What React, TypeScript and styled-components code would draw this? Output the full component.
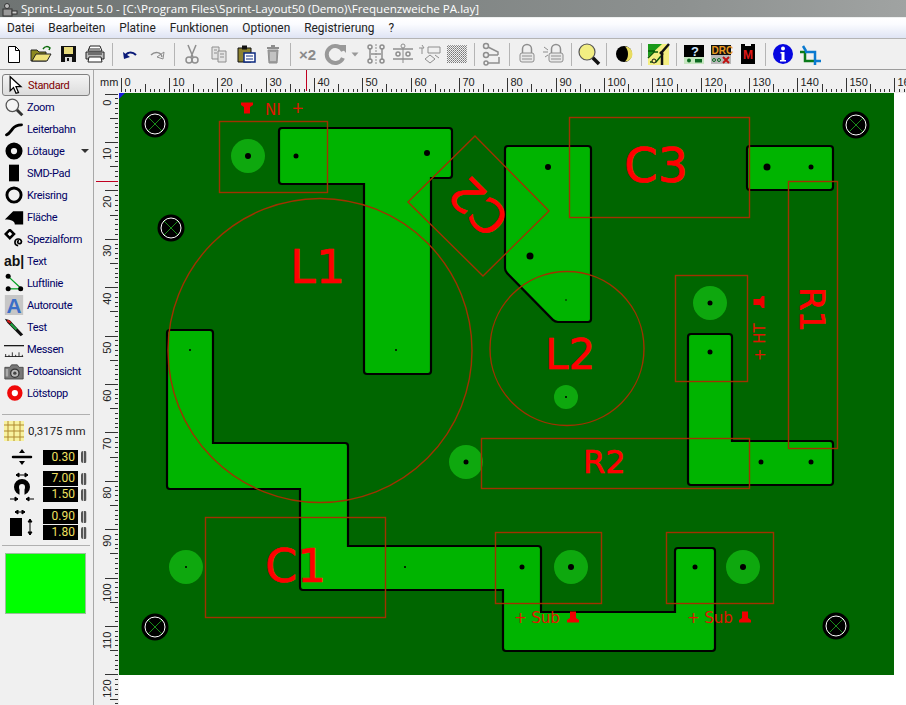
import styled, { createGlobalStyle } from 'styled-components';
import { ReactNode } from 'react';

const GlobalStyle = createGlobalStyle`
	html, body {
		margin: 0;
		padding: 0;
		background: #f0f0f0;
		overflow: hidden;
	}
`;

const Window = styled.div`
	width: 906px;
	height: 705px;
	display: flex;
	flex-direction: column;
	overflow: hidden;
	font-family: 'Roboto', 'Liberation Sans', sans-serif;
`;

const TitleBar = styled.div`
	height: 17px;
	display: flex;
	align-items: center;
	gap: 3px;
	padding-left: 2px;
	background: linear-gradient(90deg, #6f7473 0%, #7f8483 45%, #8d9190 75%, #a0a3a2 100%);
	border-bottom: 1px solid #eef0f0;
	color: #fff;
	font-family: 'Open Sans', sans-serif;
	font-size: 11.6px;
	white-space: nowrap;
`;

const MenuBar = styled.div`
	height: 20px;
	display: flex;
	align-items: center;
	gap: 14px;
	padding-left: 7px;
	background: linear-gradient(180deg, #ffffff 0%, #fbfcff 30%, #dfe4f4 100%);
	border-bottom: 1px solid #b4b4b4;
	font-size: 11.9px;
	color: #222;
`;

const Toolbar = styled.div`
	height: 30px;
	display: flex;
	align-items: center;
	background: #f0f0f0;
	border-bottom: 1px solid #9c9c9c;
`;

const ToolBtn = styled.div<{ $narrow?: boolean }>`
	width: ${(p) => (p.$narrow ? 14 : 27)}px;
	height: 26px;
	display: flex;
	align-items: center;
	justify-content: center;
	flex: none;
`;

const Sep = styled.div`
	width: 1px;
	height: 23px;
	margin: 0 3.5px;
	background: #b4b4b4;
	flex: none;
`;

const Main = styled.div`
	flex: 1;
	display: flex;
	min-height: 0;
`;

const Sidebar = styled.aside`
	width: 93px;
	flex: none;
	display: flex;
	flex-direction: column;
	padding-top: 4px;
	background: #f0f0f0;
	border-right: 1px solid #a8a8a8;
`;

const ToolRow = styled.div<{ $active?: boolean }>`
	height: ${(p) => (p.$active ? 20 : 22)}px;
	margin: 0 3px 0 2px;
	display: flex;
	align-items: center;
	gap: ${(p) => (p.$active ? 2 : 3)}px;
	padding-left: ${(p) => (p.$active ? 3 : 2)}px;
	font-size: 11px;
	letter-spacing: -0.35px;
	color: ${(p) => (p.$active ? '#800000' : '#000064')};
	border: ${(p) => (p.$active ? '1px solid #808080' : 'none')};
	border-radius: 3px;
	background: ${(p) => (p.$active ? 'linear-gradient(180deg, #f4f4f4, #dcdcdc)' : 'transparent')};
`;

const IconCell = styled.span`
	width: 20px;
	height: 20px;
	display: flex;
	align-items: center;
	justify-content: center;
	flex: none;
`;

const AbGlyph = styled.span`
	font-family: 'Liberation Sans', sans-serif;
	font-weight: 700;
	font-size: 14px;
	letter-spacing: 0;
	color: #111;
	white-space: nowrap;
`;

const DropMark = styled.span`
	margin-left: 14px;
	width: 0;
	height: 0;
	border-left: 4px solid transparent;
	border-right: 4px solid transparent;
	border-top: 4px solid #333;
`;

const SideSep = styled.div<{ $top: number }>`
	height: 1px;
	margin: ${(p) => p.$top}px 3px 0 2px;
	background: #b0b0b0;
`;

const GridRow = styled.div`
	height: 22px;
	margin-top: 5px;
	display: flex;
	align-items: center;
	gap: 4px;
	padding-left: 4px;
	font-size: 11.5px;
	color: #222;
`;

const ParamGroup = styled.div<{ $top: number }>`
	display: flex;
	align-items: center;
	margin-top: ${(p) => p.$top}px;
`;

const ParamIcon = styled.div`
	width: 43px;
	flex: none;
	display: flex;
	justify-content: center;
`;

const ParamRows = styled.div`
	display: flex;
	flex-direction: column;
	gap: 1px;
`;

const ParamRow = styled.div`
	display: flex;
	align-items: center;
	gap: 3px;
`;

const ValueBox = styled.div`
	width: 35px;
	height: 15px;
	line-height: 15px;
	padding-right: 3px;
	box-sizing: border-box;
	background: #000;
	color: #f0e060;
	text-align: right;
	font-size: 12px;
`;

const Spinner = styled.div`
	width: 6px;
	height: 12px;
	background: repeating-linear-gradient(90deg, #555 0 2px, #c8c8c8 2px 3px);
	border-radius: 2px;
`;

const Swatch = styled.div`
	width: 79px;
	height: 59px;
	margin: 7px 0 0 5px;
	background: #00ff00;
	border: 1px solid #9ac09a;
`;

const Work = styled.div`
	flex: 1;
	min-width: 0;
	display: flex;
	flex-direction: column;
	background: #fff;
`;

const TopRulerBar = styled.div`
	height: 23px;
	flex: none;
	background: #f0f0f0;
`;

const WorkBody = styled.div`
	flex: 1;
	min-height: 0;
	display: flex;
`;

const LeftRulerBar = styled.div`
	width: 25px;
	flex: none;
	background: #f0f0f0;
`;

const Canvas = styled.div`
	flex: 1;
	min-width: 0;
	background: #fff;
`;

const RulerSvg = styled.svg`
	display: block;
	font-family: 'Liberation Sans', sans-serif;
	font-size: 11px;
	fill: #222;
`;

const BoardSvg = styled.svg`
	display: block;
	background: #006600;
`;

const BigLabel = styled.text<{ $size: number }>`
	font-family: 'DejaVu Sans', sans-serif;
	font-size: ${(p) => p.$size}px;
	fill: #ff0000;
	stroke: #ff0000;
	stroke-width: 0.6px;
	stroke-linejoin: round;
`;

const SmallLabel = styled.text<{ $wide?: boolean }>`
	font-family: 'DejaVu Sans', sans-serif;
	font-size: 15px;
	fill: #e01400;
	word-spacing: ${(p) => (p.$wide ? 6 : 0)}px;
`;

const TinyIconText = styled.text<{ $fill: string; $size: number }>`
	font-family: 'Liberation Sans', sans-serif;
	font-weight: 700;
	font-size: ${(p) => p.$size}px;
	fill: ${(p) => p.$fill};
`;

const X2 = styled.span`
	font-family: 'Liberation Sans', sans-serif;
	font-weight: 700;
	font-size: 15px;
	color: #8a8a8a;
`;

const GRAY = '#8e8e8e';

function Ico({ children, size = 24 }: { children: ReactNode; size?: number }) {
	return (
		<svg width={size} height={size} viewBox="0 0 24 24">
			{children}
		</svg>
	);
}

// toolbar icons
const icons = {
	newDoc: (
		<Ico>
			<path d="M6.5 4.5h7l4 4v12h-11z" fill="#fff" stroke="#000" />
			<path d="M13.5 4.5v4h4" fill="none" stroke="#000" />
		</Ico>
	),
	open: (
		<Ico>
			<path d="M2 19V8h6l2 2h7v9z" fill="#8d8a20" stroke="#222" />
			<path d="M3 19l4-7h15l-4 7z" fill="#eee27a" stroke="#222" />
			<path d="M14 7c2-3 5-3 7-1l-1 2" fill="none" stroke="#0a6a0a" strokeWidth="1.5" />
		</Ico>
	),
	save: (
		<Ico>
			<rect x="5" y="4" width="15" height="16" fill="#111" />
			<rect x="8" y="5" width="9" height="7" fill="#e7db7c" />
			<rect x="9" y="15" width="7" height="5" fill="#ddd" />
			<rect x="11" y="16" width="2" height="3" fill="#111" />
		</Ico>
	),
	print: (
		<Ico>
			<path d="M7 4h10l2 5H5z" fill="#fff" stroke="#222" />
			<path d="M3 10h18v7H3z" fill="#bbb" stroke="#222" />
			<path d="M6 15h12l1 5H5z" fill="#fff" stroke="#222" />
			<path d="M5 12h14M6 7h11" stroke="#222" />
		</Ico>
	),
	undo: (
		<Ico>
			<path d="M7 15c1-5 7-6 11-2" fill="none" stroke="#0a1a78" strokeWidth="2" />
			<path d="M5 10l1 7 6-2z" fill="#0a1a78" />
		</Ico>
	),
	redo: (
		<Ico>
			<path d="M17 15c-1-5-7-6-11-2" fill="none" stroke={GRAY} strokeWidth="1.5" />
			<path d="M19 10l-1 7-6-2z" fill="none" stroke={GRAY} />
		</Ico>
	),
	cut: (
		<Ico>
			<path d="M8 3l5 12M16 3l-5 12" stroke={GRAY} strokeWidth="1.5" />
			<circle cx="9" cy="18" r="3" fill="none" stroke={GRAY} strokeWidth="1.5" />
			<circle cx="15" cy="18" r="3" fill="none" stroke={GRAY} strokeWidth="1.5" />
		</Ico>
	),
	copy: (
		<Ico>
			<path d="M5 5h7v12H5z" fill="#e4e4e4" stroke={GRAY} />
			<path d="M11 9h8v11h-8z" fill="#e4e4e4" stroke={GRAY} />
			<path d="M7 8h3M7 11h3M13 12h4M13 15h4" stroke={GRAY} />
		</Ico>
	),
	paste: (
		<Ico>
			<path d="M4 6h13v14H4z" fill="#8c8230" stroke="#111" />
			<rect x="8" y="3.5" width="5" height="4" fill="#111" />
			<path d="M10 11h11v9H10z" fill="#fff" stroke="#0c2a80" strokeWidth="1.5" />
			<path d="M12 14h7M12 17h7" stroke="#0c2a80" />
		</Ico>
	),
	trash: (
		<Ico>
			<path d="M7 8h10l-1 13H8z" fill="#9c9c9c" stroke={GRAY} />
			<path d="M6 6h12M10 4h4" stroke={GRAY} strokeWidth="2" />
			<path d="M10 10v9M12 10v9M14 10v9" stroke="#e8e8e8" />
		</Ico>
	),
	rotate: (
		<Ico>
			<path d="M20 9a8.5 8.5 0 1 0 0 7" fill="none" stroke="#999" strokeWidth="4" />
			<path d="M16 3h7v8z" fill="#999" />
		</Ico>
	),
	caret: (
		<Ico size={12}>
			<path d="M5 9h14l-7 8z" fill="#999" />
		</Ico>
	),
	mirror: (
		<Ico>
			<path d="M12 2v20" stroke={GRAY} strokeDasharray="2 1" />
			<path d="M6 6v12M18 6v12M7 12h10" stroke={GRAY} strokeWidth="1.5" />
			<circle cx="6" cy="5" r="2" fill="none" stroke={GRAY} strokeWidth="1.5" />
			<circle cx="6" cy="19" r="2" fill="none" stroke={GRAY} strokeWidth="1.5" />
			<circle cx="18" cy="5" r="2" fill="none" stroke={GRAY} strokeWidth="1.5" />
			<circle cx="18" cy="19" r="2" fill="none" stroke={GRAY} strokeWidth="1.5" />
		</Ico>
	),
	align: (
		<Ico>
			<path d="M2 7h20M2 17h20" stroke={GRAY} strokeWidth="1.5" />
			<path d="M12 3v18" stroke={GRAY} />
			<circle cx="7" cy="12" r="2" fill="none" stroke={GRAY} strokeWidth="1.5" />
			<circle cx="17" cy="12" r="2" fill="none" stroke={GRAY} strokeWidth="1.5" />
			<circle cx="12" cy="4" r="2" fill="#f0f0f0" stroke={GRAY} />
		</Ico>
	),
	flip: (
		<Ico>
			<path d="M1 6h5l-2-3M4 6v6M10 5h12v6H10z" fill="none" stroke={GRAY} />
			<path d="M7 17l5 4 5-4-5-4zM17 13l4 3" fill="none" stroke={GRAY} />
		</Ico>
	),
	dither: (
		<Ico>
			<defs>
				<pattern id="dth" width="2" height="2" patternUnits="userSpaceOnUse">
					<rect width="1" height="1" fill="#777" />
					<rect x="1" y="1" width="1" height="1" fill="#999" />
				</pattern>
			</defs>
			<rect x="2" y="3" width="20" height="18" fill="url(#dth)" />
		</Ico>
	),
	tree: (
		<Ico>
			<circle cx="6" cy="4" r="2.5" fill="none" stroke={GRAY} strokeWidth="1.5" />
			<circle cx="6" cy="13" r="2.5" fill="none" stroke={GRAY} strokeWidth="1.5" />
			<circle cx="6" cy="21" r="2" fill="none" stroke={GRAY} strokeWidth="1.5" />
			<path d="M8 5l10 5v3M8 13h10M8 21h11v-6" fill="none" stroke={GRAY} strokeWidth="1.5" />
		</Ico>
	),
	lock: (
		<Ico>
			<path d="M7.5 11V7a4.5 4.5 0 0 1 9 0v4" fill="none" stroke={GRAY} strokeWidth="1.5" />
			<rect x="5" y="11" width="14" height="9" rx="2" fill="#e8e8e8" stroke={GRAY} />
			<path d="M7 14h10M7 17h10" stroke={GRAY} />
		</Ico>
	),
	lockBurst: (
		<Ico>
			<path d="M9.5 11V7a4.5 4.5 0 0 1 9 0v4" fill="none" stroke={GRAY} strokeWidth="1.5" />
			<rect x="7" y="11" width="14" height="9" rx="2" fill="#e8e8e8" stroke={GRAY} />
			<path d="M9 14h10M9 17h10M2 5l4 3M1 10h5M3 15l3-2" stroke={GRAY} />
		</Ico>
	),
	magnifier: (
		<Ico>
			<path d="M15 15l7 7" stroke="#111" strokeWidth="3.5" />
			<circle cx="10" cy="10" r="8" fill="#f2ee82" stroke="#555" strokeWidth="1.2" />
		</Ico>
	),
	halfMoon: (
		<Ico>
			<circle cx="12" cy="12" r="8" fill="#000" />
			<path d="M13 4.5a7.5 7.5 0 0 1 0 15c2-2 3-4.5 3-7.5s-1-5.5-3-7.5z" fill="#e8dc60" />
		</Ico>
	),
	board: (
		<Ico>
			<rect x="1" y="2" width="21" height="21" fill="#f4ee80" />
			<path d="M1 2h14L1 15z" fill="#1a9a1a" />
			<path d="M1 16l6-6h4M1 9h7M3 20h6l5-6" stroke="#0a5a0a" strokeWidth="1.5" fill="none" />
			<path d="M22 2l-7 8v13M13 10l3 3" stroke="#111" strokeWidth="2.5" fill="none" />
			<circle cx="7" cy="19" r="2" fill="#f4ee80" stroke="#111" />
		</Ico>
	),
	help: (
		<Ico size={24}>
			<rect x="2" y="3" width="20" height="12" fill="#000" />
			<rect x="2" y="15" width="20" height="7" fill="#c6e6c0" />
			<TinyIconText x="9" y="13.5" $fill="#cfe6ff" $size={13}>?</TinyIconText>
			<circle cx="7" cy="18.5" r="2" fill="#0c6a20" />
			<rect x="13" y="17" width="7" height="3.5" fill="#0c6a20" />
		</Ico>
	),
	drc: (
		<Ico>
			<rect x="2" y="3" width="20" height="10" fill="#111" />
			<rect x="2" y="13" width="20" height="9" fill="#b8b8b8" />
			<TinyIconText x="2.5" y="12" $fill="#e89a20" $size={10}>DRC</TinyIconText>
			<circle cx="5" cy="18" r="1.5" fill="none" stroke="#0a6a20" />
			<circle cx="10" cy="18" r="1.5" fill="none" stroke="#0a6a20" />
			<path d="M14 15l6 6M20 15l-6 6" stroke="#c01010" strokeWidth="2" />
		</Ico>
	),
	chip: (
		<Ico>
			<path d="M5 2h4v2h6V2h4v20H5z" fill="#000" />
			<TinyIconText x="7" y="17" $fill="#e01818" $size={12}>M</TinyIconText>
		</Ico>
	),
	info: (
		<Ico>
			<circle cx="12" cy="12" r="10" fill="#0606e0" />
			<circle cx="12" cy="6.5" r="2" fill="#fff" />
			<path d="M9.5 10h4v8h1.5v1.5H9v-1.5h1.5v-6.5h-1z" fill="#fff" />
		</Ico>
	),
	crop: (
		<Ico>
			<path d="M2 10h5M7 10v9h10" stroke="#0a7a1a" strokeWidth="2.5" fill="none" />
			<path d="M5 4l3 5M7 10h10v9" stroke="#0a7ad0" strokeWidth="2.5" fill="none" />
			<path d="M17 19v4M17 19h6" stroke="#0a7ad0" strokeWidth="2.5" />
		</Ico>
	),
};

// sidebar icons
const sideIcons = {
	arrow: (
		<Ico size={20}>
			<path d="M5 2v17l4-4 3 7 3-1-3-7h6z" fill="#fff" stroke="#000" strokeWidth="1.5" />
		</Ico>
	),
	zoom: (
		<Ico size={20}>
			<path d="M15 15l7 7" stroke="#333" strokeWidth="3.5" />
			<circle cx="10" cy="10" r="7.5" fill="#f4f4f4" stroke="#555" strokeWidth="1.5" />
		</Ico>
	),
	track: (
		<Ico size={20}>
			<path d="M3 19c3-1 4-3 7-7s6-5 11-5" fill="none" stroke="#000" strokeWidth="3.5" strokeLinecap="round" />
		</Ico>
	),
	pad: (
		<Ico size={20}>
			<circle cx="12" cy="12" r="7" fill="none" stroke="#000" strokeWidth="6.5" />
		</Ico>
	),
	smd: (
		<Ico size={20}>
			<rect x="6" y="2" width="12" height="20" fill="#000" />
		</Ico>
	),
	ring: (
		<Ico size={20}>
			<circle cx="12" cy="12" r="8.5" fill="none" stroke="#000" strokeWidth="3.5" />
		</Ico>
	),
	area: (
		<Ico size={20}>
			<path d="M1 15L11 5h12v16H13c0-4-4-6-12-6z" fill="#000" />
		</Ico>
	),
	special: (
		<Ico size={20}>
			<path d="M7 1l5 5-5 5-5-5z" fill="#fff" stroke="#000" strokeWidth="3" />
			<path d="M17 20a4 4 0 1 1 4-5c0 3-3 3-4 2s-1-3 1-3" fill="none" stroke="#000" strokeWidth="2" />
		</Ico>
	),
	airwire: (
		<Ico size={20}>
			<path d="M5 4l15 14" stroke="#00a020" strokeWidth="1.5" />
			<path d="M5 19h15" stroke="#00a020" strokeWidth="1.5" />
			<circle cx="5" cy="4" r="3" fill="#000" />
			<circle cx="5" cy="19" r="3" fill="#000" />
			<circle cx="20" cy="19" r="3" fill="#000" />
		</Ico>
	),
	autoroute: (
		<Ico size={22}>
			<rect x="1" y="0" width="22" height="24" fill="#c6c6c6" />
			<TinyIconText x="3" y="21" $fill="#3a6ec8" $size={25}>A</TinyIconText>
		</Ico>
	),
	test: (
		<Ico size={20}>
			<path d="M1 2l6 2 16 17-3 2L4 7z" fill="#111" />
			<path d="M8 8l7 7" stroke="#20a040" strokeWidth="2.5" />
			<path d="M4 4l4 3" stroke="#d01818" strokeWidth="2.5" />
		</Ico>
	),
	measure: (
		<Ico size={20}>
			<path d="M0 8h24" stroke="#111" strokeWidth="1.5" />
			<path d="M1 21h22M2 18v3M6 19v2M10 16v5M14 19v2M18 16v5M22 19v2" stroke="#111" />
		</Ico>
	),
	camera: (
		<Ico size={21}>
			<path d="M1 7h6l2-3h7l2 3h5v14H1z" fill="#777" stroke="#444" />
			<circle cx="13" cy="14" r="5" fill="#bbb" stroke="#333" strokeWidth="1.5" />
			<circle cx="13" cy="14" r="2" fill="#444" />
			<rect x="2" y="9" width="3" height="9" fill="#aaa" />
		</Ico>
	),
	stop: (
		<Ico size={20}>
			<circle cx="13" cy="12" r="6.5" fill="#fff" stroke="#f00808" strokeWidth="5.5" />
			<circle cx="13" cy="12" r="2" fill="#fff" />
		</Ico>
	),
};

const tools: { label: string; icon: ReactNode; drop?: boolean; active?: boolean }[] = [
	{ label: 'Standard', icon: sideIcons.arrow, active: true },
	{ label: 'Zoom', icon: sideIcons.zoom },
	{ label: 'Leiterbahn', icon: sideIcons.track },
	{ label: 'Lötauge', icon: sideIcons.pad, drop: true },
	{ label: 'SMD-Pad', icon: sideIcons.smd },
	{ label: 'Kreisring', icon: sideIcons.ring },
	{ label: 'Fläche', icon: sideIcons.area },
	{ label: 'Spezialform', icon: sideIcons.special },
	{ label: 'Text', icon: <AbGlyph>ab|</AbGlyph> },
	{ label: 'Luftlinie', icon: sideIcons.airwire },
	{ label: 'Autoroute', icon: sideIcons.autoroute },
	{ label: 'Test', icon: sideIcons.test },
	{ label: 'Messen', icon: sideIcons.measure },
	{ label: 'Fotoansicht', icon: sideIcons.camera },
	{ label: 'Lötstopp', icon: sideIcons.stop },
];

const menus = ['Datei', 'Bearbeiten', 'Platine', 'Funktionen', 'Optionen', 'Registrierung', '?'];

function TopRuler() {
	const ticks: string[] = [];
	const labels: ReactNode[] = [];
	for (let mm = 0; mm <= 162; mm++) {
		const x = Math.round(120.5 + mm * 4.835) + 0.5;
		const h = mm % 10 === 0 ? 14 : mm % 5 === 0 ? 8 : 3;
		ticks.push(`M${x} 92v-${h}`);
		if (mm % 10 === 0) {
			labels.push(
				<text key={mm} x={x + 3} y={86}>
					{mm}
				</text>
			);
		}
	}
	return (
		<RulerSvg width={812} height={23} viewBox="94 70 812 23">
			<text x={100} y={86}>mm</text>
			<path d={ticks.join('')} stroke="#333" fill="none" shapeRendering="crispEdges" />
			<path d="M306.5 70v21" stroke="#c00020" shapeRendering="crispEdges" />
			{labels}
		</RulerSvg>
	);
}

function LeftRuler() {
	const ticks: string[] = [];
	const labels: ReactNode[] = [];
	for (let mm = 0; mm <= 126; mm++) {
		const y = Math.round(93.5 + mm * 4.84) + 0.5;
		const w = mm % 10 === 0 ? 13 : mm % 5 === 0 ? 8 : 3;
		ticks.push(`M118 ${y}h-${w}`);
		if (mm % 10 === 0) {
			labels.push(
				<text key={mm} transform={`translate(111 ${y + 5}) rotate(-90)`} textAnchor="end">
					{mm}
				</text>
			);
		}
	}
	return (
		<RulerSvg width={25} height={612} viewBox="94 93 25 612">
			<path d={ticks.join('')} stroke="#333" fill="none" shapeRendering="crispEdges" />
			<path d="M96 181.5h22" stroke="#c00020" shapeRendering="crispEdges" />
			{labels}
		</RulerSvg>
	);
}

const traces: [number, number][][] = [
	[[279, 128], [452, 128], [452, 178], [431, 178], [431, 374], [364, 374], [364, 184], [279, 184]],
	[[505, 146], [591, 146], [591, 322], [555, 322], [505, 271]],
	[
		[167, 330], [213, 330], [213, 443], [348, 443], [348, 546], [541, 546], [541, 612], [675, 612],
		[675, 548], [715, 548], [715, 651], [503, 651], [503, 590], [300, 590], [300, 489], [167, 489],
	],
	[[688, 334], [732, 334], [732, 441], [833, 441], [833, 485], [688, 485]],
	[[747, 146], [833, 146], [833, 190], [747, 190]],
];

// rounds only the outer corners, the traces all run clockwise
function tracePath(pts: [number, number][], r = 3) {
	let d = '';
	pts.forEach((p, i) => {
		const a = pts[(i + pts.length - 1) % pts.length];
		const b = pts[(i + 1) % pts.length];
		const la = Math.hypot(a[0] - p[0], a[1] - p[1]);
		const lb = Math.hypot(b[0] - p[0], b[1] - p[1]);
		const cross = (p[0] - a[0]) * (b[1] - p[1]) - (p[1] - a[1]) * (b[0] - p[0]);
		const q = cross > 0 ? r : 0;
		const x1 = p[0] + ((a[0] - p[0]) / la) * q;
		const y1 = p[1] + ((a[1] - p[1]) / la) * q;
		const x2 = p[0] + ((b[0] - p[0]) / lb) * q;
		const y2 = p[1] + ((b[1] - p[1]) / lb) * q;
		d += `${i === 0 ? 'M' : 'L'}${x1} ${y1}Q${p[0]} ${p[1]} ${x2} ${y2}`;
	});
	return d + 'Z';
}

const lands: [number, number, number][] = [
	[248, 156, 17],
	[710, 303, 17],
	[566, 397, 12],
	[466, 462, 17],
	[186, 567, 17],
	[571, 567, 17],
	[743, 567, 17],
];

const holes: [number, number, number][] = [
	[248, 156, 3],
	[296, 156, 2.5],
	[427, 153, 3],
	[548, 167, 3],
	[530, 256, 3.5],
	[566, 300, 0.8],
	[396, 350, 1],
	[190, 350, 1],
	[186, 567, 1],
	[405, 567, 1],
	[522, 567, 2.5],
	[571, 567, 3],
	[695, 567, 2.5],
	[743, 567, 3],
	[710, 303, 2.5],
	[710, 352, 2.5],
	[767, 167, 3.5],
	[811, 167, 2.5],
	[761, 462, 2.5],
	[811, 462, 2.5],
	[466, 462, 2.5],
	[566, 397, 1],
];

const mounts: [number, number][] = [
	[155, 124],
	[171, 228],
	[856, 125],
	[155, 627],
	[836, 626],
];

const outlines: [number, number, number, number][] = [
	[219, 121, 108, 71],
	[569, 117, 180, 100],
	[675, 275, 72, 106],
	[788, 181, 49, 267],
	[481, 438, 268, 50],
	[205, 517, 180, 100],
	[495, 532, 106, 71],
	[666, 532, 107, 71],
];

function PolarMark({ x, y, turn }: { x: number; y: number; turn: number }) {
	return (
		<path
			transform={`translate(${x} ${y}) rotate(${turn})`}
			d="M-6 5.5H6V3L3 1V-5.5H-3V1L-6 3z"
			fill="#f00000"
		/>
	);
}

function Board() {
	return (
		<BoardSvg width={775} height={582} viewBox="119 93 775 582">
			{traces.map((pts, i) => (
				<path key={i} d={tracePath(pts)} fill="#00b400" stroke="#000" strokeWidth="2.2" />
			))}
			{lands.map(([x, y, r]) => (
				<circle key={`${x}-${y}`} cx={x} cy={y} r={r} fill="#0ea80e" />
			))}
			{holes.map(([x, y, r]) => (
				<circle key={`${x}-${y}`} cx={x} cy={y} r={r} fill="#000" />
			))}
			{mounts.map(([x, y]) => (
				<g key={`${x}-${y}`}>
					<circle cx={x} cy={y} r={13.5} fill="#000" />
					<circle cx={x} cy={y} r={10} fill="none" stroke="#fff" strokeWidth="1" />
					<path d={`M${x - 7} ${y - 7}l14 14M${x + 7} ${y - 7}l-14 14`} stroke="#20b020" strokeWidth="0.8" />
				</g>
			))}
			<g fill="none" stroke="#a03200" strokeWidth="1.4">
				{outlines.map(([x, y, w, h]) => (
					<rect key={`${x}-${y}`} x={x + 0.5} y={y + 0.5} width={w} height={h} />
				))}
				<polygon points="475,136 549,211 483,276 408,202" />
				<circle cx={320} cy={350.5} r={152} />
				<circle cx={567} cy={348.5} r={77} />
			</g>
			<path d="M119 93h6l-6 6z" fill="#1818e0" />
			<BigLabel $size={46} x={290} y={283}>L1</BigLabel>
			<BigLabel $size={46} x={265} y={582}>C1</BigLabel>
			<BigLabel $size={48} x={624} y={182}>C3</BigLabel>
			<BigLabel $size={42} x={545} y={369}>L2</BigLabel>
			<BigLabel $size={32} x={583} y={473}>R2</BigLabel>
			<BigLabel $size={34} transform="translate(800 287) rotate(90)">R1</BigLabel>
			<BigLabel $size={46} textAnchor="middle" transform="translate(490 195) rotate(225)">C2</BigLabel>
			<SmallLabel $wide transform="translate(304 103) rotate(180)">+ IN</SmallLabel>
			<SmallLabel transform="translate(765 361) rotate(-90)">+ HT</SmallLabel>
			<SmallLabel x={514} y={623}>+ Sub</SmallLabel>
			<SmallLabel x={687} y={623}>+ Sub</SmallLabel>
			<PolarMark x={247} y={108} turn={180} />
			<PolarMark x={759} y={302} turn={-90} />
			<PolarMark x={573} y={617} turn={0} />
			<PolarMark x={745} y={617} turn={0} />
		</BoardSvg>
	);
}

function GridIcon() {
	return (
		<svg width="20" height="20" viewBox="0 0 20 20">
			<rect width="20" height="20" fill="#f8f2a0" />
			<path d="M0 4h20M0 10h20M0 16h20M4 0v20M10 0v20M16 0v20" stroke="#b08a30" />
		</svg>
	);
}

function ClearanceIcon() {
	return (
		<svg width="22" height="16" viewBox="0 0 22 16">
			<path d="M2 8h18" stroke="#000" strokeWidth="2.5" strokeLinecap="round" />
			<path d="M11 0l3 4H8zM11 16l3-4H8z" fill="#000" />
		</svg>
	);
}

function PadSizeIcon() {
	return (
		<svg width="28" height="30" viewBox="0 0 28 30">
			<path d="M8 3h12M8 3l3-2v4zM20 3l-3-2v4z" fill="#000" stroke="#000" />
			<circle cx="14" cy="15" r="5.5" fill="none" stroke="#000" strokeWidth="5" />
			<rect x="11.5" y="15" width="5" height="9" fill="#f0f0f0" />
			<path d="M2 27h8M26 27h-8M10 27l-3-2v4zM18 27l3-2v4z" fill="#000" stroke="#000" />
		</svg>
	);
}

function SmdSizeIcon() {
	return (
		<svg width="28" height="30" viewBox="0 0 28 30">
			<path d="M7 2h10M7 2l3-2v4zM17 2l-3-2v4z" fill="#000" stroke="#000" />
			<rect x="2" y="8" width="12" height="18" fill="#000" />
			<path d="M22 9v16M22 9l-2 3h4zM22 25l-2-3h4z" fill="#000" stroke="#000" />
		</svg>
	);
}

function Value({ children }: { children: string }) {
	return (
		<ParamRow>
			<ValueBox>{children}</ValueBox>
			<Spinner />
		</ParamRow>
	);
}

export default function App() {
	return (
		<Window>
			<GlobalStyle />
			<TitleBar>
				<svg width="16" height="16" viewBox="0 0 16 16">
					<circle cx="5" cy="5" r="2.5" fill="#bbb" stroke="#333" />
					<rect x="1" y="8" width="9" height="7" fill="#999" stroke="#333" />
					<rect x="10" y="10" width="5" height="3" fill="#ccc" stroke="#333" />
				</svg>
				Sprint-Layout 5.0 - [C:\Program Files\Sprint-Layout50 (Demo)\Frequenzweiche PA.lay]
			</TitleBar>
			<MenuBar>
				{menus.map((m) => (
					<span key={m}>{m}</span>
				))}
			</MenuBar>
			<Toolbar>
				<ToolBtn>{icons.newDoc}</ToolBtn>
				<ToolBtn>{icons.open}</ToolBtn>
				<ToolBtn>{icons.save}</ToolBtn>
				<ToolBtn>{icons.print}</ToolBtn>
				<Sep />
				<ToolBtn>{icons.undo}</ToolBtn>
				<ToolBtn>{icons.redo}</ToolBtn>
				<Sep />
				<ToolBtn>{icons.cut}</ToolBtn>
				<ToolBtn>{icons.copy}</ToolBtn>
				<ToolBtn>{icons.paste}</ToolBtn>
				<ToolBtn>{icons.trash}</ToolBtn>
				<Sep />
				<ToolBtn>
					<X2>×2</X2>
				</ToolBtn>
				<ToolBtn>{icons.rotate}</ToolBtn>
				<ToolBtn $narrow>{icons.caret}</ToolBtn>
				<ToolBtn>{icons.mirror}</ToolBtn>
				<ToolBtn>{icons.align}</ToolBtn>
				<ToolBtn>{icons.flip}</ToolBtn>
				<ToolBtn>{icons.dither}</ToolBtn>
				<Sep />
				<ToolBtn>{icons.tree}</ToolBtn>
				<Sep />
				<ToolBtn>{icons.lock}</ToolBtn>
				<ToolBtn>{icons.lockBurst}</ToolBtn>
				<Sep />
				<ToolBtn>{icons.magnifier}</ToolBtn>
				<Sep />
				<ToolBtn>{icons.halfMoon}</ToolBtn>
				<Sep />
				<ToolBtn>{icons.board}</ToolBtn>
				<Sep />
				<ToolBtn>{icons.help}</ToolBtn>
				<ToolBtn>{icons.drc}</ToolBtn>
				<ToolBtn>{icons.chip}</ToolBtn>
				<Sep />
				<ToolBtn>{icons.info}</ToolBtn>
				<ToolBtn>{icons.crop}</ToolBtn>
			</Toolbar>
			<Main>
				<Sidebar>
					{tools.map((t) => (
						<ToolRow key={t.label} $active={t.active}>
							<IconCell>{t.icon}</IconCell>
							{t.label}
							{t.drop && <DropMark />}
						</ToolRow>
					))}
					<SideSep $top={10} />
					<GridRow>
						<GridIcon />
						0,3175 mm
					</GridRow>
					<ParamGroup $top={7}>
						<ParamIcon>
							<ClearanceIcon />
						</ParamIcon>
						<ParamRows>
							<Value>0.30</Value>
						</ParamRows>
					</ParamGroup>
					<ParamGroup $top={6}>
						<ParamIcon>
							<PadSizeIcon />
						</ParamIcon>
						<ParamRows>
							<Value>7.00</Value>
							<Value>1.50</Value>
						</ParamRows>
					</ParamGroup>
					<ParamGroup $top={7}>
						<ParamIcon>
							<SmdSizeIcon />
						</ParamIcon>
						<ParamRows>
							<Value>0.90</Value>
							<Value>1.80</Value>
						</ParamRows>
					</ParamGroup>
					<SideSep $top={5} />
					<Swatch />
				</Sidebar>
				<Work>
					<TopRulerBar>
						<TopRuler />
					</TopRulerBar>
					<WorkBody>
						<LeftRulerBar>
							<LeftRuler />
						</LeftRulerBar>
						<Canvas>
							<Board />
						</Canvas>
					</WorkBody>
				</Work>
			</Main>
		</Window>
	);
}
